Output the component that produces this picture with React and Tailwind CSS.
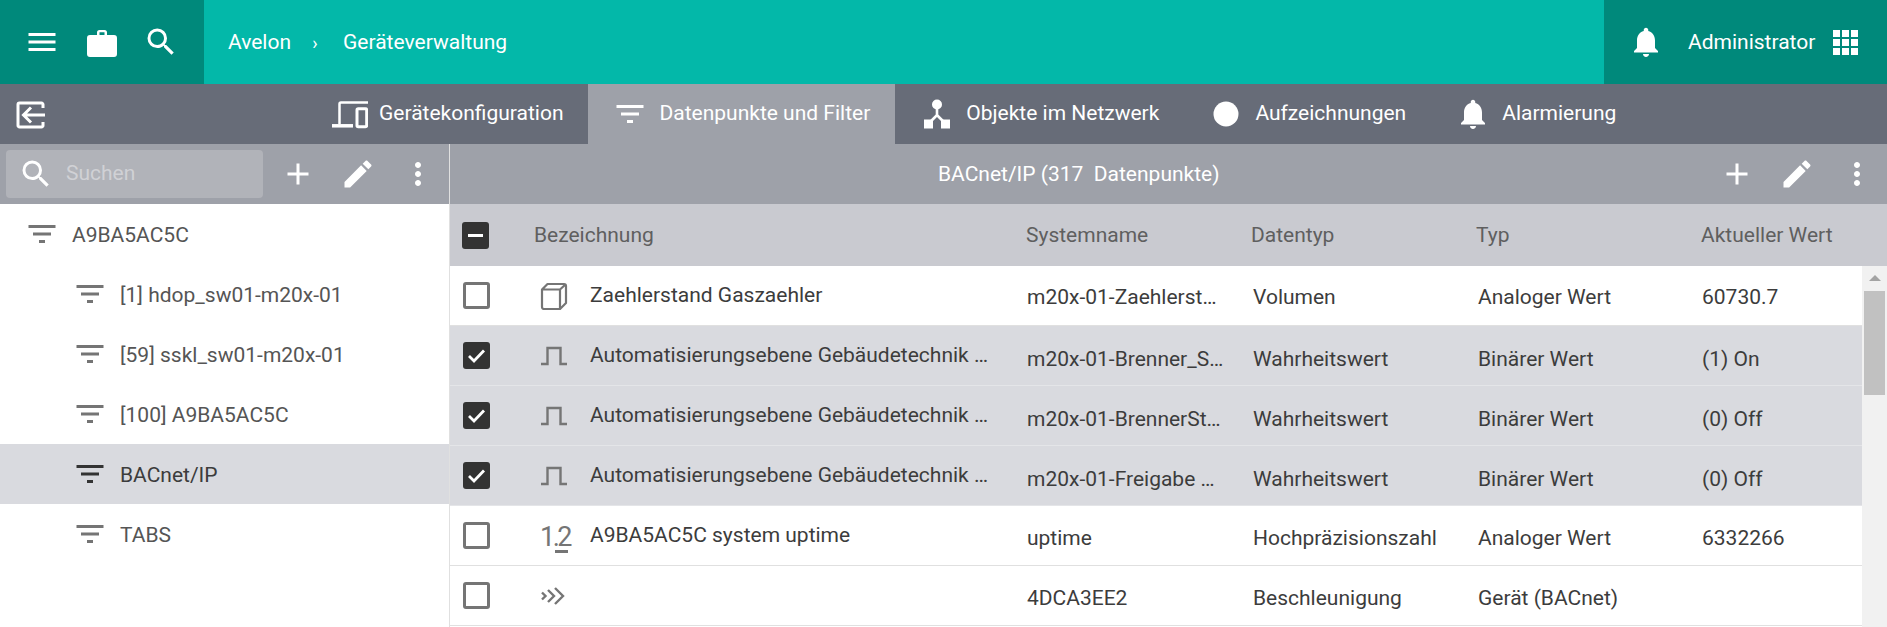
import React from "react";

const Ico = ({ d, size = 36, vb = 24, cls = "", fill = "currentColor" }) => (
  <svg width={size} height={size} viewBox={`0 0 ${vb} ${vb}`} className={`shrink-0 ${cls}`} fill={fill}>
    <path d={d} />
  </svg>
);

const P = {
  menu: "M3 18h18v-2H3v2zm0-5h18v-2H3v2zm0-7v2h18V6H3z",
  search: "M15.5 14h-.79l-.28-.27A6.471 6.471 0 0 0 16 9.5 6.5 6.5 0 1 0 9.5 16c1.61 0 3.09-.59 4.23-1.57l.27.28v.79l5 4.99L20.49 19l-4.99-5zm-6 0C7.01 14 5 11.99 5 9.5S7.01 5 9.5 5 14 7.01 14 9.5 11.99 14 9.5 14z",
  filter: "M10 18h4v-2h-4v2zM3 6v2h18V6H3zm3 7h12v-2H6v2z",
  bell: "M12 22c1.1 0 2-.9 2-2h-4c0 1.1.89 2 2 2zm6-6v-5c0-3.07-1.64-5.64-4.5-6.32V4c0-.83-.67-1.5-1.5-1.5s-1.5.67-1.5 1.5v.68C7.63 5.36 6 7.92 6 11v5l-2 2v1h16v-1l-2-2z",
  plus: "M19 13h-6v6h-2v-6H5v-2h6V5h2v6h6v2z",
  pencil: "M3 17.25V21h3.75L17.81 9.94l-3.75-3.75L3 17.25zM20.71 7.04c.39-.39.39-1.02 0-1.41l-2.34-2.34c-.39-.39-1.02-.39-1.41 0l-1.83 1.83 3.75 3.75 1.83-1.83z",
  dots: "M12 8c1.1 0 2-.9 2-2s-.9-2-2-2-2 .9-2 2 .9 2 2 2zm0 2c-1.1 0-2 .9-2 2s.9 2 2 2 2-.9 2-2-.9-2-2-2zm0 6c-1.1 0-2 .9-2 2s.9 2 2 2 2-.9 2-2-.9-2-2-2z",
};

const Briefcase = () => (
  <svg width="36" height="36" viewBox="0 0 36 36" fill="#fff" className="shrink-0">
    <path d="M13 8.500a2.500 2.500 0 0 1 2.500-2.500h5a2.500 2.500 0 0 1 2.500 2.500V11h7a3 3 0 0 1 3 3v16a3 3 0 0 1-3 3H6a3 3 0 0 1-3-3V14a3 3 0 0 1 3-3h7zM15.500 8.200V11h5V8.200z" fillRule="evenodd" />
  </svg>
);

const Apps = () => (
  <svg width="25" height="25" viewBox="0 0 25 25" fill="#fff" className="shrink-0">
    {[0, 9, 18].map((y) =>
      [0, 9, 18].map((x) => <rect key={`${x}-${y}`} x={x} y={y} width="7" height="7" />)
    )}
  </svg>
);

const ExitBox = () => (
  <svg width="36" height="36" viewBox="0 0 36 36" fill="none" stroke="#fff" strokeWidth="3" className="shrink-0">
    <path d="M31 12V8.500a1.500 1.500 0 0 0-1.500-1.500h-22A1.500 1.500 0 0 0 6 8.500v21A1.500 1.500 0 0 0 7.500 31h22a1.500 1.500 0 0 0 1.500-1.500V26" />
    <path d="M33 19H12M19 11.500 11.500 19l7.500 7.500" />
  </svg>
);

const Devices = () => (
  <svg width="36" height="36" viewBox="0 0 36 36" fill="none" stroke="#fff" strokeWidth="2.500" className="shrink-0">
    <path d="M36 6.500H9a1.500 1.500 0 0 0-1.500 1.500v20" />
    <path d="M0 29.800h21" strokeWidth="3.500" />
    <rect x="25" y="12.800" width="9.700" height="18" rx="1.200" strokeWidth="3" />
  </svg>
);

const Network = () => (
  <svg width="36" height="36" viewBox="0 0 36 36" fill="#fff" className="shrink-0">
    <circle cx="18" cy="8.500" r="5" />
    <path d="M16.700 12h2.600v6.500l7 7-1.800 1.900-6.500-6.500-6.500 6.500-1.800-1.900 7-7z" />
    <rect x="5" y="23.500" width="9" height="9" />
    <rect x="22" y="23.500" width="9" height="9" />
  </svg>
);

const Circle = () => (
  <svg width="36" height="36" viewBox="0 0 36 36" fill="#fff" className="shrink-0">
    <circle cx="18" cy="18" r="12.500" />
  </svg>
);

const Cube = () => (
  <svg width="28" height="28" viewBox="0 0 28 28" fill="none" stroke="#757575" strokeWidth="2.200" strokeLinejoin="round">
    <path d="M2 7.500h18V27H4a2 2 0 0 1-2-2zM2 7.500 7.500 2H24a2 2 0 0 1 2 2v17l-6 6M20 7.500 26 2" />
  </svg>
);

const Pulse = () => (
  <svg width="28" height="20" viewBox="0 0 28 20" fill="none" stroke="#757575" strokeWidth="2.400">
    <path d="M1 18h6.500V2h13v16H27" />
  </svg>
);

const Num = () => (
  <span className="relative flex h-7 w-7 items-end text-[27px] leading-[26px] tracking-[-2.5px] text-[#757575]">
    1.2
    <span className="absolute bottom-[-3px] right-0 h-[3px] w-[13px] bg-[#757575]" />
  </span>
);

const Chevrons = () => (
  <svg width="28" height="18" viewBox="0 0 26 18" fill="none" stroke="#757575" strokeWidth="2.400">
    <path d="M1 5.500 4.500 9 1 12.500M7 3l6 6-6 6M14 1l8 8-8 8" />
  </svg>
);

const Box = ({ state }) => {
  if (state === "off") return <span className="block h-[27px] w-[27px] rounded-[3px] border-[3px] border-[#757575] bg-white" />;
  return (
    <span className="flex h-[27px] w-[27px] items-center justify-center rounded-[3px] bg-[#333333]">
      {state === "on" ? (
        <svg width="21" height="21" viewBox="0 0 21 21" fill="none" stroke="#fff" strokeWidth="2.800">
          <path d="M3 11l5 5L18 5.500" />
        </svg>
      ) : (
        <span className="h-[3px] w-[15px] bg-white" />
      )}
    </span>
  );
};

const tabs = [
  ["Gerätekonfiguration", <Devices />],
  ["Datenpunkte und Filter", <Ico d={P.filter} />, true],
  ["Objekte im Netzwerk", <Network />],
  ["Aufzeichnungen", <Circle />],
  ["Alarmierung", <Ico d={P.bell} />],
];

const tree = [
  ["A9BA5AC5C", 0],
  ["[1] hdop_sw01-m20x-01", 1],
  ["[59] sskl_sw01-m20x-01", 1],
  ["[100] A9BA5AC5C", 1],
  ["BACnet/IP", 1, true],
  ["TABS", 1],
];

const rows = [
  ["off", <Cube />, "Zaehlerstand Gaszaehler", "m20x-01-Zaehlerst…", "Volumen", "Analoger Wert", "60730.7", false, "pt-[4px]"],
  ["on", <Pulse />, "Automatisierungsebene Gebäudetechnik …", "m20x-01-Brenner_S…", "Wahrheitswert", "Binärer Wert", "(1) On", true, "pt-[8px]"],
  ["on", <Pulse />, "Automatisierungsebene Gebäudetechnik …", "m20x-01-BrennerSt…", "Wahrheitswert", "Binärer Wert", "(0) Off", true, "pt-[8px]"],
  ["on", <Pulse />, "Automatisierungsebene Gebäudetechnik …", "m20x-01-Freigabe …", "Wahrheitswert", "Binärer Wert", "(0) Off", true, "pt-[8px]"],
  ["off", <Num />, "A9BA5AC5C system uptime", "uptime", "Hochpräzisionszahl", "Analoger Wert", "6332266", false, "pt-[6px]"],
  ["off", <Chevrons />, "", "4DCA3EE2", "Beschleunigung", "Gerät (BACnet)", "", false, "pt-[6px]"],
];

const Actions = ({ cls = "" }) => (
  <div className={`flex items-center gap-[24px] text-white ${cls}`}>
    <Ico d={P.plus} size={36} />
    <Ico d={P.pencil} size={36} />
    <Ico d={P.dots} size={36} />
  </div>
);

export default function App() {
  return (
    <div className="flex h-[627px] w-[1887px] flex-col overflow-hidden bg-white font-['Roboto',sans-serif] text-[21px] text-[#3c3c3c]">
      <header className="flex h-[84px] shrink-0 items-center bg-[#03b8a9] text-white">
        <div className="flex h-full w-[204px] items-center gap-[24px] bg-[#00897b] pl-[24px]">
          <Ico d={P.menu} size={36} />
          <Briefcase />
          <Ico d={P.search} size={36} cls="-ml-[1px]" />
        </div>
        <div className="ml-[24px] flex flex-1 items-center pt-[1px]">
          <span>Avelon</span>
          <span className="mx-[19px] w-[10px] text-center text-[18px]">›</span>
          <span className="ml-[4px]">Geräteverwaltung</span>
        </div>
        <div className="flex h-full w-[283px] items-center bg-[#00897b] pl-[24px]">
          <Ico d={P.bell} size={36} />
          <span className="ml-[24px] pt-[1px]">Administrator</span>
          <span className="ml-[18px]"><Apps /></span>
        </div>
      </header>

      <nav className="flex h-[60px] shrink-0 items-center bg-[#676c78] text-white">
        <div className="ml-[12px] w-[48px]"><ExitBox /></div>
        <div className="ml-[248px] flex h-full">
          {tabs.map(([t, icon, active]) => (
            <div key={t} className={`flex h-full items-center gap-[11px] pl-[24px] pr-[25px] ${active ? "bg-[#9ea1a9]" : ""}`}>
              {icon}
              <span>{t}</span>
            </div>
          ))}
        </div>
      </nav>

      <div className="flex min-h-0 flex-1">
        <aside className="flex w-[450px] shrink-0 flex-col border-r border-[#e0e0e0]">
          <div className="flex h-[60px] shrink-0 items-center bg-[#9ea1a9] pl-[6px]">
            <div className="flex h-[48px] w-[257px] items-center rounded-[4px] bg-[#b1b3b9] pl-[12px] text-white">
              <Ico d={P.search} size={36} />
              <span className="ml-[12px] text-[#d0d1d5]">Suchen</span>
            </div>
            <Actions cls="ml-[17px]" />
          </div>
          {tree.map(([t, lvl, sel]) => (
            <div key={t} className={`flex h-[60px] shrink-0 items-center ${lvl ? "pl-[72px]" : "pl-[24px]"} ${sel ? "bg-[#d9dadf] text-[#3c3c3c]" : "text-[#555555]"}`}>
              <Ico d={P.filter} size={36} cls={sel ? "text-[#333333]" : "text-[#757575]"} />
              <span className="ml-[12px] pt-[3px]">{t}</span>
            </div>
          ))}
        </aside>

        <main className="flex min-w-0 flex-1 flex-col">
          <div className="flex h-[60px] shrink-0 items-center bg-[#9ea1a9] text-white">
            <div className="flex-1 whitespace-pre pl-[488px] pt-[2px]">BACnet/IP (317  Datenpunkte)</div>
            <Actions cls="mr-[12px]" />
          </div>
          <div className="flex h-[62px] shrink-0 items-center bg-[#c9cad0] text-[#5f5f5f]">
            <div className="w-[84px] pl-[12px]"><Box state="some" /></div>
            <div className="w-[492px] pt-[2px]">Bezeichnung</div>
            <div className="w-[225px] pt-[2px]">Systemname</div>
            <div className="w-[225px] pt-[2px]">Datentyp</div>
            <div className="w-[225px] pt-[2px]">Typ</div>
            <div className="pt-[2px]">Aktueller Wert</div>
          </div>
          <div className="flex min-h-0 flex-1">
            <div className="min-w-0 flex-1">
              {rows.map((r, i) => (
                <div key={i} className={`flex h-[60px] items-center border-b ${r[7] ? "border-[#e4e5e8] bg-[#d9dadf]" : "border-[#e0e0e0] bg-white"} text-[#3c3c3c]`}>
                  <div className="w-[84px] pl-[13px]"><Box state={r[0]} /></div>
                  <div className="flex w-[56px] justify-start pl-[6px]">{r[1]}</div>
                  <div className="w-[437px] truncate">{r[2]}</div>
                  <div className={`w-[226px] truncate ${r[8]}`}>{r[3]}</div>
                  <div className={`w-[225px] whitespace-nowrap ${r[8]}`}>{r[4]}</div>
                  <div className={`w-[224px] whitespace-nowrap ${r[8]}`}>{r[5]}</div>
                  <div className={r[8]}>{r[6]}</div>
                </div>
              ))}
            </div>
            <div className="flex w-[25px] shrink-0 flex-col items-center bg-[#f1f1f1] pt-[9px]">
              <span className="h-0 w-0 border-x-[6px] border-b-[6px] border-x-transparent border-b-[#a3a3a3]" />
              <span className="mt-[10px] h-[104px] w-[21px] bg-[#c1c1c1]" />
            </div>
          </div>
        </main>
      </div>
    </div>
  );
}
